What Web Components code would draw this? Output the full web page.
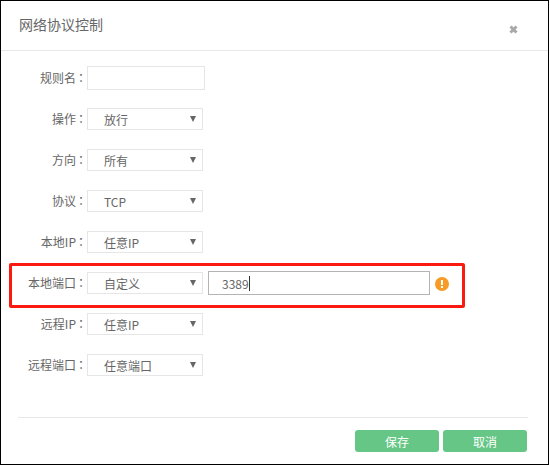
<!DOCTYPE html>
<html>
<head>
<meta charset="utf-8">
<style>
  html, body { margin: 0; padding: 0; background: #fff; }
  body { font-family: "Noto Sans CJK SC", "Liberation Sans", sans-serif; }
</style>
</head>
<body>
<rule-dialog title-text="网络协议控制">
  <form-row label="规则名"><text-box width="118"></text-box></form-row>
  <form-row label="操作"><select-box value="放行"></select-box></form-row>
  <form-row label="方向"><select-box value="所有"></select-box></form-row>
  <form-row label="协议"><select-box value="TCP"></select-box></form-row>
  <form-row label="本地IP"><select-box value="任意IP"></select-box></form-row>
  <form-row label="本地端口" marked>
    <select-box value="自定义"></select-box>
    <text-box width="222" value="3389" focused></text-box>
    <warn-icon></warn-icon>
  </form-row>
  <form-row label="远程IP"><select-box value="任意IP"></select-box></form-row>
  <form-row label="远程端口"><select-box value="任意端口"></select-box></form-row>
  <dialog-button slot="footer" label="保存"></dialog-button>
  <dialog-button slot="footer" label="取消"></dialog-button>
</rule-dialog>

<script>
class RuleDialog extends HTMLElement {
  constructor() {
    super();
    this.attachShadow({ mode: "open" });
    this.shadowRoot.innerHTML = `
      <style>
        :host {
          display: block;
          width: 550px;
          height: 465px;
          background: #fff;
        }
        .frame {
          box-sizing: border-box;
          width: 549px;
          height: 465px;
          border: 1px solid #000;
        }
        .head {
          display: flex;
          justify-content: space-between;
          height: 50px;
          padding: 14px 29px 0 18px;
          box-sizing: border-box;
          border-bottom: 1px solid #e8e8e8;
          color: #666;
          font-size: 14px;
          line-height: 18px;
        }
        .close { margin-top: 9px; width: 11px; height: 11px; }
        .body {
          display: flex;
          flex-direction: column;
          gap: 19px;
          padding: 16px 0 0 0;
          height: 351px;
          box-sizing: border-box;
        }
        .foot {
          display: flex;
          justify-content: flex-end;
          gap: 4px;
          margin: 15px 20px 0 17px;
          padding: 12px 1px 0 0;
          border-top: 1px solid #e8e8e8;
        }
      </style>
      <div class="frame">
        <div class="head">
          <span class="title"></span>
          <svg class="close" viewBox="0 0 11 11"><path d="M2.5 2.5 8.5 8.5M8.5 2.5 2.5 8.5" stroke="#a8a8a8" stroke-width="3"/></svg>
        </div>
        <div class="body"><slot></slot></div>
        <div class="foot"><slot name="footer"></slot></div>
      </div>`;
    this.shadowRoot.querySelector(".title").textContent = this.getAttribute("title-text");
  }
}

class FormRow extends HTMLElement {
  constructor() {
    super();
    this.attachShadow({ mode: "open" });
    this.shadowRoot.innerHTML = `
      <style>
        :host {
          display: flex;
          align-items: center;
          position: relative;
          height: 22px;
          color: #666;
          font-size: 12px;
        }
        label {
          width: 86px;
          flex: none;
          text-align: right;
          white-space: pre;
          line-height: 22px;
        }
        .colon { font-family: "Noto Sans CJK TC", sans-serif; margin-left: -1px; }
        .items { display: flex; align-items: center; gap: 5px; }
        .mark {
          position: absolute;
          left: 8px;
          top: -9px;
          width: 456px;
          height: 45px;
          box-sizing: border-box;
          border: 3px solid #fb1a0f;
          border-radius: 2px;
          pointer-events: none;
        }
      </style>
      <label><span class="text"></span><span class="colon">\uff1a</span></label>
      <div class="items"><slot></slot></div>`;
    this.shadowRoot.querySelector(".text").textContent = this.getAttribute("label");
    if (this.hasAttribute("marked")) {
      const mark = document.createElement("div");
      mark.className = "mark";
      this.shadowRoot.appendChild(mark);
    }
  }
}

class SelectBox extends HTMLElement {
  constructor() {
    super();
    this.attachShadow({ mode: "open" });
    this.shadowRoot.innerHTML = `
      <style>
        :host {
          display: flex;
          align-items: center;
          justify-content: space-between;
          box-sizing: border-box;
          width: 116px;
          height: 22px;
          padding: 0 6px 0 16px;
          border: 1px solid #e6e6e6;
          color: #666;
          font-size: 12px;
          background: #fff;
        }
        .arrow {
          width: 0;
          height: 0;
          border-left: 3px solid transparent;
          border-right: 3px solid transparent;
          border-top: 6px solid #666;
        }
      </style>
      <span class="val"></span><span class="arrow"></span>`;
    this.shadowRoot.querySelector(".val").textContent = this.getAttribute("value");
  }
}

class TextBox extends HTMLElement {
  constructor() {
    super();
    this.attachShadow({ mode: "open" });
    const focused = this.hasAttribute("focused");
    this.shadowRoot.innerHTML = `
      <style>
        :host {
          display: flex;
          align-items: center;
          box-sizing: border-box;
          width: ${this.getAttribute("width")}px;
          height: 24px;
          padding-left: 13px;
          border: 1px solid ${focused ? "#b3b3b3" : "#e6e6e6"};
          color: #666;
          font-size: 12px;
          background: #fff;
        }
        .caret { width: 1px; height: 15px; background: #333; }
      </style>
      <span class="val"></span>${focused ? '<span class="caret"></span>' : ""}`;
    this.shadowRoot.querySelector(".val").textContent = this.getAttribute("value") || "";
  }
}

class WarnIcon extends HTMLElement {
  constructor() {
    super();
    this.attachShadow({ mode: "open" });
    this.shadowRoot.innerHTML = `
      <style>
        :host { display: block; width: 14px; height: 14px; margin-top: 1px; }
        svg { display: block; }
      </style>
      <svg width="14" height="14" viewBox="0 0 14 14">
        <circle cx="7" cy="7" r="7" fill="#f89a26"/>
        <rect x="6" y="3" width="2" height="5" fill="#fff"/>
        <rect x="6" y="9" width="2" height="2" fill="#fff"/>
      </svg>`;
  }
}

class DialogButton extends HTMLElement {
  constructor() {
    super();
    this.attachShadow({ mode: "open" });
    this.shadowRoot.innerHTML = `
      <style>
        :host {
          display: flex;
          align-items: center;
          justify-content: center;
          width: 84px;
          height: 22px;
          border-radius: 3px;
          background: #66c685;
          color: #fff;
          font-size: 12px;
        }
      </style>
      <span></span>`;
    this.shadowRoot.querySelector("span").textContent = this.getAttribute("label");
  }
}

customElements.define("rule-dialog", RuleDialog);
customElements.define("form-row", FormRow);
customElements.define("select-box", SelectBox);
customElements.define("text-box", TextBox);
customElements.define("warn-icon", WarnIcon);
customElements.define("dialog-button", DialogButton);
</script>
</body>
</html>
